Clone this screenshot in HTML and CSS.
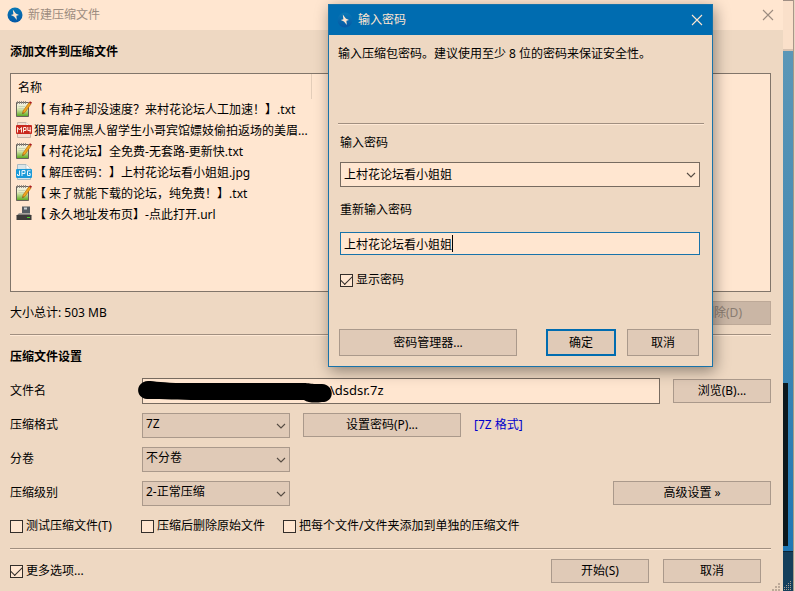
FILE: index.html
```html
<!DOCTYPE html>
<html lang="zh-CN">
<head>
    <meta charset="UTF-8">
    <meta name="viewport" content="width=device-width, initial-scale=1.0">
    <title>新建压缩文件</title>
    <link rel="stylesheet" href="styles.css">
</head>
<body>
    <!-- shared icons -->
    <svg class="sprite" aria-hidden="true">
        <defs>
            <linearGradient id="page" x1="0" y1="0" x2="0" y2="1">
                <stop offset="0" stop-color="#f3efe6"/>
                <stop offset="0.4" stop-color="#e8efc4"/>
                <stop offset="1" stop-color="#57a81c"/>
            </linearGradient>
            <linearGradient id="drive" x1="0" y1="0" x2="0" y2="1">
                <stop offset="0" stop-color="#b9b4ad"/>
                <stop offset="1" stop-color="#4a4a4a"/>
            </linearGradient>
            <linearGradient id="orb" x1="0" y1="0" x2="0" y2="1">
                <stop offset="0" stop-color="#0878b5"/>
                <stop offset="1" stop-color="#0558a5"/>
            </linearGradient>
        </defs>
        <symbol id="icon-app" viewBox="0 0 16 16">
            <circle cx="8" cy="8" r="7.5" fill="url(#orb)"/>
            <path d="M5.8 2.6 L8.8 6.4 L12 8 L9.4 8.8 L9.8 13 L7 9.4 L3.8 7.9 L6.4 7.2 Z" fill="#ffe6cf"/>
        </symbol>
        <symbol id="icon-close" viewBox="0 0 12 12">
            <path d="M1 1 L11 11 M11 1 L1 11" fill="none" stroke="currentColor" stroke-width="1.1"/>
        </symbol>
        <symbol id="icon-arrow" viewBox="0 0 10 6">
            <path d="M1 1 L5 5 L9 1" fill="none" stroke="currentColor" stroke-width="1.1"/>
        </symbol>
        <symbol id="icon-txt" viewBox="0 0 16 16">
            <path d="M0.5 1.5 H12.5 V15.5 H0.5 Z" fill="url(#page)" stroke="#66625c"/>
            <path d="M1.5 0 V3 M3.5 0 V3 M5.5 0 V3 M7.5 0 V3 M9.5 0 V3" stroke="#8c8780" stroke-width="0.9"/>
            <path d="M2.5 5.5 H9 M2.5 7.5 H8" stroke="#c3cbb0" stroke-width="0.8"/>
            <path d="M6.5 12.8 L7 10 L13 1.6 L15 3 L9 11.4 Z" fill="#f2a51f" stroke="#a7650c" stroke-width="0.6"/>
            <path d="M13 1.6 L14 0.2 L16 1.4 L15 3 Z" fill="#a8191c"/>
            <path d="M6.5 12.8 L6.8 11.4 L7.8 12 Z" fill="#333"/>
        </symbol>
        <symbol id="icon-mp4" viewBox="0 0 16 16">
            <path d="M1.5 0.5 H10 L14.5 5 V15.5 H1.5 Z" fill="#f1ddd0" stroke="#c5b3a6"/>
            <path d="M10 0.5 V5 H14.5" fill="#fff" stroke="#c5b3a6" stroke-width="0.7"/>
            <rect x="0" y="3" width="16" height="9" rx="1" fill="#c8281e"/>
            <path d="M1.5 10.5 V5.5 L3.5 8 L5.5 5.5 V10.5 M7.5 10.5 V5.5 H10 V8.5 H7.5 M11.8 5 V8.5 H14.8 M14.2 5 V10.5" fill="none" stroke="#ffe9dc"/>
        </symbol>
        <symbol id="icon-jpg" viewBox="0 0 16 16">
            <path d="M1.5 0.5 H10 L14.5 5 V15.5 H1.5 Z" fill="#dbe5e8" stroke="#a9bac2"/>
            <path d="M10 0.5 V5 H14.5" fill="#fff" stroke="#a9bac2" stroke-width="0.7"/>
            <rect x="0" y="5" width="16" height="9" rx="1" fill="#1b9ad8"/>
            <path d="M3.5 6.5 V11.5 H1.5 V10 M6 12 V6.5 H9 V9.5 H6 M14.5 6.8 H11.5 V11.5 H14.2 V9.5 H13" fill="none" stroke="#e9f6fc"/>
        </symbol>
        <symbol id="icon-url" viewBox="0 0 16 16">
            <rect x="6" y="0.5" width="8" height="7" fill="#555d63"/>
            <rect x="8" y="1.5" width="3" height="2" fill="#c9d0d3"/>
            <rect x="9" y="7" width="2.5" height="2.5" fill="#555"/>
            <path d="M3 7 H13 L15.5 10 H0.5 Z" fill="url(#drive)"/>
            <rect x="0.5" y="9" width="15" height="5" fill="#3c3b3a"/>
            <rect x="11" y="11" width="3" height="1" fill="#48d02c"/>
        </symbol>
        <symbol id="icon-grip" viewBox="0 0 9 9">
            <path d="M6 0h2v2h-2z M3 3h2v2h-2z M6 3h2v2h-2z M0 6h2v2h-2z M3 6h2v2h-2z M6 6h2v2h-2z" fill="currentColor"/>
        </symbol>
        <symbol id="icon-grip-dots" viewBox="0 0 8 10">
            <path d="M6 0h1v1h-1z M4 2h1v1h-1z M6 2h1v1h-1z M2 4h1v1h-1z M4 4h1v1h-1z M6 4h1v1h-1z M0 6h1v1h-1z M2 6h1v1h-1z M4 6h1v1h-1z M6 6h1v1h-1z M0 8h1v1h-1z M2 8h1v1h-1z M4 8h1v1h-1z M6 8h1v1h-1z" fill="currentColor"/>
        </symbol>
    </svg>

    <main class="window">
        <header class="titlebar">
            <svg class="app-icon"><use href="#icon-app"/></svg>
            <span class="title">新建压缩文件</span>
            <button class="btn-close" aria-label="关闭"><svg><use href="#icon-close"/></svg></button>
        </header>

        <form class="content">
            <h2>添加文件到压缩文件</h2>
            <div class="file-list">
                <table>
                    <thead>
                        <tr><th>名称</th></tr>
                    </thead>
                    <tbody>
                        <tr><td><svg><use href="#icon-txt"/></svg>【 有种子却没速度&#65311;来村花论坛人工加速&#65281;】.txt</td></tr>
                        <tr><td><svg><use href="#icon-mp4"/></svg>狼哥雇佣黑人留学生小哥宾馆嫖妓偷拍返场的美眉...</td></tr>
                        <tr><td><svg><use href="#icon-txt"/></svg>【 村花论坛】全免费-无套路-更新快.txt</td></tr>
                        <tr><td><svg><use href="#icon-jpg"/></svg>【 解压密码&#65306;】上村花论坛看小姐姐.jpg</td></tr>
                        <tr><td><svg><use href="#icon-txt"/></svg>【 来了就能下载的论坛&#65292;纯免费&#65281;】.txt</td></tr>
                        <tr><td><svg><use href="#icon-url"/></svg>【 永久地址发布页】-点此打开.url</td></tr>
                    </tbody>
                </table>
            </div>
            <div class="summary">
                <span>大小总计: 503 MB</span>
                <button type="button" class="btn" disabled>删除(D)</button>
            </div>
            <hr>

            <h2 class="settings-title">压缩文件设置</h2>
            <div class="settings">
                <div class="row">
                    <label for="fileName">文件名</label>
                    <div class="field path">
                        <input type="text" id="fileName" value="\dsdsr.7z">
                        <svg class="marker" viewBox="0 0 194 22" aria-hidden="true">
                            <path d="M10 0 C16 0 26 2 44 2 H165 C172 2 172 3 178 3 H184 C197 4 197 21 184 21 C178 22 170 22 166 19 H60 C40 19 26 18 9 18 C-3 17 -3 1 10 0 Z"/>
                        </svg>
                    </div>
                    <button type="button" class="btn">浏览(B)...</button>
                </div>
                <div class="row">
                    <label for="format">压缩格式</label>
                    <div class="field combo">
                        <select id="format"><option>7Z</option></select>
                        <svg><use href="#icon-arrow"/></svg>
                    </div>
                    <button type="button" class="btn btn-wide">设置密码(P)...</button>
                    <a href="#">[7Z 格式]</a>
                </div>
                <div class="row">
                    <label for="volume">分卷</label>
                    <div class="field combo">
                        <select id="volume"><option>不分卷</option></select>
                        <svg><use href="#icon-arrow"/></svg>
                    </div>
                </div>
                <div class="row">
                    <label for="level">压缩级别</label>
                    <div class="field combo">
                        <select id="level"><option>2-正常压缩</option></select>
                        <svg><use href="#icon-arrow"/></svg>
                    </div>
                    <button type="button" class="btn btn-wide push-right">高级设置 »</button>
                </div>
            </div>
            <div class="options">
                <label class="check"><input type="checkbox">测试压缩文件(T)</label>
                <label class="check"><input type="checkbox">压缩后删除原始文件</label>
                <label class="check"><input type="checkbox">把每个文件/文件夹添加到单独的压缩文件</label>
            </div>
            <hr>
            <footer class="actions">
                <label class="check"><input type="checkbox" checked>更多选项...</label>
                <button type="button" class="btn push-right">开始(S)</button>
                <button type="button" class="btn">取消</button>
            </footer>
        </form>
        <svg class="grip"><use href="#icon-grip"/></svg>
    </main>

    <aside class="desktop">
        <div class="back-title"></div>
        <div class="back-body"><div class="back-panel"></div></div>
        <div class="back-status"><svg><use href="#icon-grip-dots"/></svg></div>
    </aside>

    <section class="dialog" role="dialog" aria-label="输入密码">
        <header class="titlebar">
            <svg class="app-icon"><use href="#icon-app"/></svg>
            <span class="title">输入密码</span>
            <button class="btn-close" aria-label="关闭"><svg><use href="#icon-close"/></svg></button>
        </header>
        <form class="dialog-body">
            <p>输入压缩包密码。建议使用至少 8 位的密码来保证安全性。</p>
            <hr>
            <div class="dialog-fields">
                <label for="password">输入密码</label>
                <div class="field combo combo-light">
                    <select id="password"><option>上村花论坛看小姐姐</option></select>
                    <svg><use href="#icon-arrow"/></svg>
                </div>
                <label for="confirm">重新输入密码</label>
                <div class="field confirm">
                    <input type="text" id="confirm" value="上村花论坛看小姐姐">
                    <span class="caret"></span>
                </div>
                <label class="check"><input type="checkbox" checked>显示密码</label>
            </div>
            <div class="dialog-actions">
                <button type="button" class="btn btn-manager">密码管理器...</button>
                <button type="button" class="btn btn-default push-right">确定</button>
                <button type="button" class="btn">取消</button>
            </div>
        </form>
    </section>
</body>
</html>
```
FILE: styles.css
```css
* {
    box-sizing: border-box;
}
body {
    display: flex;
    margin: 0;
    min-height: 100vh;
    font-family: "Noto Sans", "Noto Sans CJK SC", sans-serif;
    font-size: 12px;
    line-height: 18px;
    color: #000;
    text-spacing-trim: space-all;
    background: #eed8c2;
}
button, input, select {
    font: inherit;
    color: inherit;
    margin: 0;
}
svg {
    display: block;
}
.sprite {
    position: absolute;
    width: 0;
    height: 0;
}

/* main window */
.window {
    position: relative;
    display: flex;
    flex-direction: column;
    flex: 1;
}
.titlebar {
    display: flex;
    align-items: center;
    flex: none;
    height: 30px;
    padding: 0 9px 1px 7px;
    background: #ffe6d0;
    color: #9c8c7f;
}
.app-icon {
    width: 16px;
    height: 16px;
    margin-right: 5px;
}
.btn-close {
    margin-left: auto;
    padding: 0;
    border: none;
    background: none;
}
.btn-close svg {
    width: 12px;
    height: 12px;
}
.content {
    display: flex;
    flex-direction: column;
    flex: 1;
    padding: 13px 12px 8px 10px;
}
h2 {
    margin: 0 0 12px;
    font-size: 12px;
    line-height: 18px;
    font-weight: bold;
}
hr {
    width: 100%;
    height: 2px;
    margin: 0;
    border: none;
    border-top: 1px solid #a08f80;
    background: #ffe9d5;
}

/* file list */
.file-list {
    flex: 1;
    border: 1px solid #81756a;
    background: #ffe6d0;
}
table {
    width: 301px;
    border-collapse: collapse;
}
th {
    height: 25px;
    padding: 2px 7px 0;
    border-right: 1px solid #e3cdb9;
    font-weight: normal;
    text-align: left;
}
td {
    height: 21px;
    padding: 0 0 0 5px;
    white-space: nowrap;
}
td svg {
    float: left;
    width: 16px;
    height: 16px;
    margin: 0 2px 0 0;
}
.summary {
    display: flex;
    align-items: center;
    justify-content: space-between;
    height: 42px;
}

/* settings */
.settings-title {
    margin: 12px 0;
}
.settings {
    display: grid;
    gap: 8px;
}
.row {
    display: flex;
    align-items: center;
    height: 26px;
}
.row > label {
    width: 132px;
}
.field {
    position: relative;
}
.path {
    flex: 1;
}
.row .combo {
    width: 148px;
}
.row .btn {
    margin-left: 13px;
}
.row a {
    margin-left: 13px;
    color: #0000cd;
    text-decoration: none;
}
.field input, .field select {
    display: block;
    width: 100%;
    height: 25px;
    padding: 0 3px;
    border: 1px solid #776b60;
    border-radius: 0;
    background: #ffe6d0;
    outline: none;
}
.path input {
    height: 26px;
    padding: 0 3px 2px 187px;
    font-size: 13px;
}
.marker {
    position: absolute;
    left: -4px;
    top: 3px;
    width: 194px;
    height: 22px;
}
.field select {
    appearance: none;
    border-color: #aa998b;
    background: #e0cab7;
}
.row .combo select {
    padding-bottom: 2px;
}
.combo svg {
    position: absolute;
    right: 4px;
    top: 10px;
    width: 10px;
    height: 6px;
    color: #554b43;
    pointer-events: none;
}
.combo-light select {
    border-color: #776b60;
    background: #ffe6d0;
}
.btn {
    width: 98px;
    height: 24px;
    padding: 0;
    border: 1px solid #aa998b;
    border-radius: 0;
    background: #e0cab7;
}
.btn:disabled {
    border-color: #bda998;
    background: #cab6a5;
    color: #897c71;
}
.btn-wide {
    width: 158px;
}
.row .push-right, .push-right {
    margin-left: auto;
}

/* tick boxes */
.options {
    display: grid;
    grid-template-columns: 131px 142px auto;
    margin: 11px 0 13px;
}
.check {
    display: flex;
    align-items: center;
    gap: 3px;
    white-space: nowrap;
}
.check input {
    appearance: none;
    display: grid;
    place-items: center;
    width: 13px;
    height: 13px;
    border: 1px solid #332e2a;
    background: #ffe6d0;
}
.check input:checked::before {
    content: "";
    width: 10px;
    height: 5px;
    margin-top: -3px;
    border: solid #332e2a;
    border-width: 0 0 1px 1px;
    transform: rotate(-45deg);
}
.actions {
    display: flex;
    align-items: center;
    gap: 14px;
    padding: 9px 10px 0 0;
}
.grip {
    position: absolute;
    right: 2px;
    bottom: -1px;
    width: 9px;
    height: 9px;
    color: #bca998;
}

/* what shows of the desktop on the right */
.desktop {
    display: flex;
    flex-direction: column;
    width: 12px;
    border-right: 1px solid #ead5c2;
    box-shadow: inset -1px 0 #a8968a;
}
.back-title {
    height: 51px;
    margin-right: 1px;
    border-top: 1px solid #a08f84;
    border-bottom: 2px solid #d8c2b0;
    background: #fae0ca;
}
.back-body {
    display: flex;
    align-items: flex-end;
    flex: 1;
    margin-right: 1px;
    padding-bottom: 5px;
    background: linear-gradient(#5b97b7, #4389b2 50%, #1f77b4);
}
.back-panel {
    width: 5px;
    height: 33%;
    background: #0b171c;
}
.back-status {
    height: 40px;
    margin-right: 1px;
    padding: 29px 0 0 1px;
    border-top: 1px solid #0c2638;
    background: #153f5b;
    color: #a59c90;
}
.back-status svg {
    width: 8px;
    height: 10px;
}

/* password dialog */
.dialog {
    position: absolute;
    left: 328px;
    top: 4px;
    width: 385px;
    border: 1px solid #1873aa;
    background: #eed8c2;
    box-shadow: 2px 4px 14px rgba(0, 0, 0, 0.4);
}
.dialog .titlebar {
    padding: 0 9px 0 8px;
    background: #006cb0;
    color: #ffe6d0;
}
.dialog-body {
    padding: 10px 8px 10px 9px;
}
.dialog-body p {
    height: 78px;
    margin: 0;
}
.dialog-fields {
    display: grid;
    padding: 9px 4px 0 2px;
}
.dialog-fields > label {
    height: 18px;
}
.dialog-fields .field {
    margin: 10px 0 14px;
}
.dialog-fields .confirm {
    margin: 13px 0 16px;
}
.confirm input {
    height: 23px;
    border-color: #1873aa;
}
.caret {
    position: absolute;
    left: 112px;
    top: 3px;
    width: 1px;
    height: 17px;
    background: #000;
}
.dialog-actions {
    display: flex;
    gap: 11px;
    margin-top: 40px;
    padding: 0 5px 0 1px;
}
.dialog-actions .btn {
    width: 72px;
    height: 27px;
}
.dialog-actions .btn-manager {
    width: 178px;
}
.dialog-actions .btn-default {
    width: 70px;
    border: 2px solid #006cb0;
}
```
